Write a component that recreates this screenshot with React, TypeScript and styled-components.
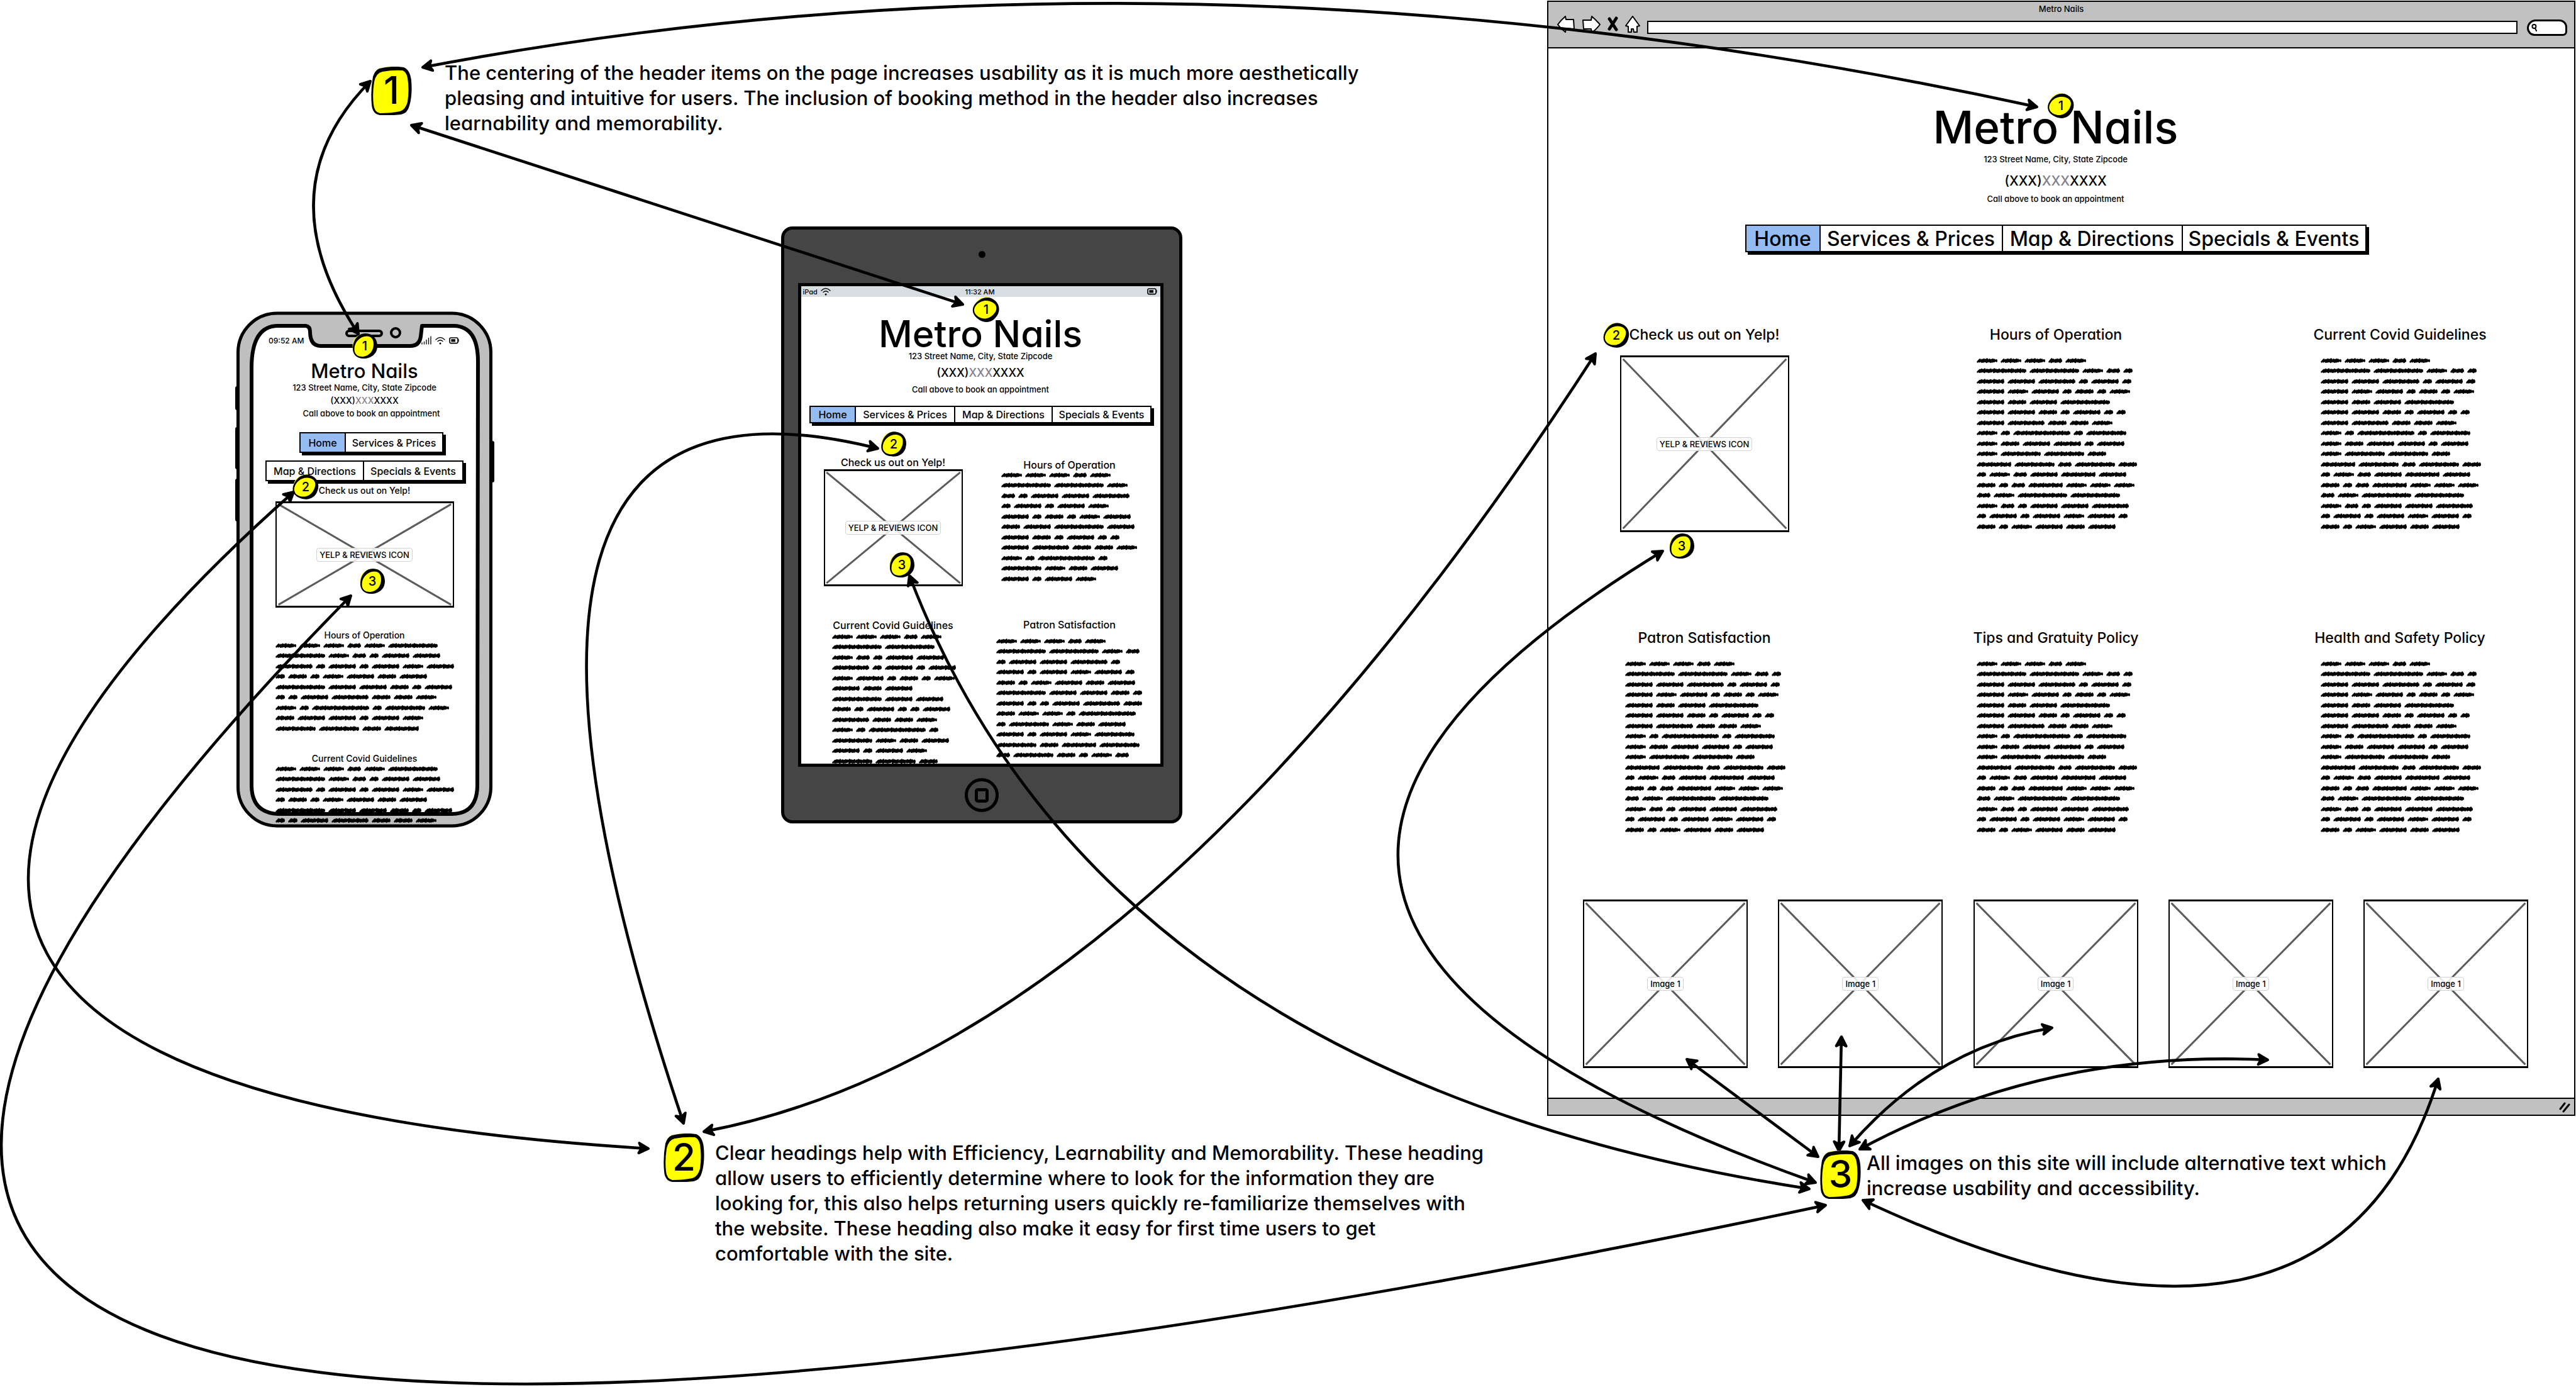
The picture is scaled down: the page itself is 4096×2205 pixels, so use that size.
import React from "react";
import styled, { createGlobalStyle } from "styled-components";

const INK = "#000000";
const CHROME = "#c1c1c1";
const FONT = `Inter, "Liberation Sans", Arial, sans-serif`;

const GlobalStyle = createGlobalStyle`
  *, *::before, *::after { box-sizing: border-box; }
  body {
    margin: 0;
    background: #ffffff;
    color: ${INK};
    font-family: ${FONT};
    font-feature-settings: "cv11";
    font-weight: 450;
  }
  h1, h2, p, figure { margin: 0; font-weight: inherit; }
`;

/* ---------- scribbled placeholder copy ---------- */

const WORDS = [
  33, 33, 33, 22, 33, 79, 79, 33, 22, 15, 44, 44, 59, 15, 44, 15, 44, 33, 44,
  15, 30, 15, 33, 44, 30, 44, 79, 44, 44, 30, 15, 44, 15, 15, 44, 59, 30, 30,
  33, 33, 15, 91, 15, 64, 33, 30, 44, 44, 15, 44, 33, 64, 64, 30, 55, 64, 22,
  64, 30, 15, 33, 22, 44, 55, 44, 30, 15, 22, 55,
];

const BREAKS = {
  desktop: [5, 5, 6, 7, 4, 7, 5, 5, 6, 4, 5, 6, 7, 4, 6, 7, 6],
  tabletHours: [5, 3, 5, 5, 6, 4, 6, 5, 4, 4, 4],
  tabletCovid: [5, 2, 5, 5, 6, 3, 3, 6, 4, 4, 4, 4, 3],
  tabletPatron: [5, 4, 5, 6, 6, 5, 6, 5, 5, 5, 4, 6],
  phoneHours: [6, 6, 7, 7, 6, 7, 6, 6, 4],
  phoneCovid: [6, 6, 7, 7, 6, 7],
};

function wave(width: number) {
  const highs = [2.2, 2.8, 1.8, 2.5, 3];
  const lows = [6.4, 5.8, 6.8, 6, 6.6];
  let d = "M1.6 6.2";
  let x = 1.6;
  let i = width % 5;
  while (x + 4 < width - 1) {
    d += ` L${(x + 3.6).toFixed(1)} ${highs[i % 5]} L${(x + 3).toFixed(1)} ${lows[i % 5]}`;
    x += i % 4 === 3 ? 3.6 : 2.6;
    i += 1;
  }
  return d + ` L${width - 1.6} 3.4 L${width - 1.4} 5.4`;
}

const ScribbleBlock = styled.div<{ $gap?: number; $indent?: number }>`
  display: flex;
  flex-direction: column;
  margin-top: ${(p) => p.$gap ?? 0}px;
  margin-left: ${(p) => p.$indent ?? 0}px;
  align-self: flex-start;
`;

const ScribbleRow = styled.div`
  display: flex;
  align-items: center;
  gap: 5px;
  height: 16px;
  &:nth-child(even) { height: 17px; }
`;

const ScribbleWord = styled.svg`
  display: block;
  flex: none;
  overflow: visible;
`;

function Scribble({ breaks, gap, indent }: { breaks: number[]; gap?: number; indent?: number }) {
  let cursor = 0;
  return (
    <ScribbleBlock $gap={gap} $indent={indent} aria-hidden="true">
      {breaks.map((count, row) => {
        const start = cursor;
        cursor += count;
        return (
          <ScribbleRow key={row}>
            {Array.from({ length: count }, (_, k) => {
              const w = WORDS[(start + k) % WORDS.length];
              return (
                <ScribbleWord key={k} width={w} height={9} viewBox={`0 0 ${w} 9`}>
                  <path d={wave(w)} fill="none" stroke={INK} strokeWidth={2.8} strokeLinejoin="round" strokeLinecap="round" />
                </ScribbleWord>
              );
            })}
          </ScribbleRow>
        );
      })}
    </ScribbleBlock>
  );
}

/* ---------- shared wireframe parts ---------- */

const Line = styled.p<{ $size: number; $height: number; $gap?: number }>`
  font-size: ${(p) => p.$size}px;
  line-height: ${(p) => p.$height}px;
  margin-top: ${(p) => p.$gap ?? 0}px;
  text-align: center;
  white-space: nowrap;
`;

const Heading = styled.h2<{ $size: number; $height: number; $gap?: number }>`
  font-size: ${(p) => p.$size}px;
  line-height: ${(p) => p.$height}px;
  margin-top: ${(p) => p.$gap ?? 0}px;
  font-weight: 450;
  text-align: center;
  white-space: nowrap;
`;

const ShopName = styled.h1<{ $size: number; $height: number; $gap?: number }>`
  font-size: ${(p) => p.$size}px;
  line-height: ${(p) => p.$height}px;
  margin-top: ${(p) => p.$gap ?? 0}px;
  font-weight: 500;
  text-align: center;
  white-space: nowrap;
`;

const Muted = styled.span`
  color: #82808c;
`;

function Phone({ size, height, gap }: { size: number; height: number; gap: number }) {
  return (
    <Line $size={size} $height={height} $gap={gap}>
      (XXX)<Muted>XXX</Muted>XXXX
    </Line>
  );
}

const Tabs = styled.nav<{ $height: number; $gap: number; $size: number }>`
  display: flex;
  height: ${(p) => p.$height}px;
  margin-top: ${(p) => p.$gap}px;
  border: 2px solid ${INK};
  background: #ffffff;
  box-shadow: 4px 4px 0 ${INK};
  font-size: ${(p) => p.$size}px;
`;

const Tab = styled.a<{ $width: number; $active?: boolean }>`
  display: flex;
  align-items: center;
  justify-content: center;
  width: ${(p) => p.$width}px;
  color: ${INK};
  text-decoration: none;
  white-space: nowrap;
  background: ${(p) => (p.$active ? "#94bbf2" : "#ffffff")};
  & + & { border-left: 2px solid ${INK}; }
`;

const TAB_NAMES = ["Home", "Services & Prices", "Map & Directions", "Specials & Events"];

function TabBar(props: { from?: number; widths: number[]; height: number; gap: number; size: number }) {
  const from = props.from ?? 0;
  return (
    <Tabs $height={props.height} $gap={props.gap} $size={props.size}>
      {props.widths.map((w, i) => (
        <Tab key={i} href="#" $width={w} $active={from + i === 0}>
          {TAB_NAMES[from + i]}
        </Tab>
      ))}
    </Tabs>
  );
}

const Frame = styled.figure<{ $w: number; $h: number; $gap?: number }>`
  display: grid;
  place-items: center;
  width: ${(p) => p.$w}px;
  height: ${(p) => p.$h}px;
  margin-top: ${(p) => p.$gap ?? 0}px;
  border: 2px solid ${INK};
  border-top-width: 3px;
  border-bottom-width: 3px;
  background: #ffffff;
  > * { grid-area: 1 / 1; }
`;

const Cross = styled.svg`
  width: 100%;
  height: 100%;
  display: block;
`;

const Caption = styled.figcaption`
  padding: 0 4px;
  border: 1px solid #d2d2d2;
  border-radius: 4px;
  background: rgba(255, 255, 255, 0.85);
  font-size: 13px;
  line-height: 20px;
  white-space: nowrap;
`;

function Placeholder({ w, h, gap, label }: { w: number; h: number; gap?: number; label: string }) {
  return (
    <Frame $w={w} $h={h} $gap={gap}>
      <Cross viewBox="0 0 100 100" preserveAspectRatio="none" aria-hidden="true">
        <g stroke="#5c5c5c" strokeWidth={3}>
          <line x1="1" y1="1" x2="99" y2="99" vectorEffect="non-scaling-stroke" />
          <line x1="99" y1="1" x2="1" y2="99" vectorEffect="non-scaling-stroke" />
        </g>
      </Cross>
      <Caption>{label}</Caption>
    </Frame>
  );
}

const StatusIcon = styled.svg`
  display: block;
  flex: none;
`;

function Wifi() {
  return (
    <StatusIcon width="16" height="13" viewBox="0 0 16 13" fill="none" stroke={INK} strokeLinecap="round">
      <path d="M1 5 Q8 -2 15 5" strokeWidth="1.3" />
      <path d="M4 7.6 Q8 4 12 7.6" strokeWidth="1.3" />
      <circle cx="8" cy="11" r="1.5" fill={INK} stroke="none" />
    </StatusIcon>
  );
}

function Battery() {
  return (
    <StatusIcon width="16" height="11" viewBox="0 0 16 11">
      <rect x="1" y="1" width="13" height="8.6" rx="2" fill="none" stroke={INK} strokeWidth="1.6" />
      <rect x="3.4" y="3.2" width="6.6" height="4.2" fill={INK} />
      <rect x="14" y="3.2" width="1.6" height="4" fill={INK} />
    </StatusIcon>
  );
}

function Signal() {
  return (
    <StatusIcon width="16" height="14" viewBox="0 0 16 14" stroke={INK} strokeWidth="1.3" strokeLinecap="round">
      <path d="M1 13V11 M4.5 13V9.5 M8 13V6.5 M11.5 13V3.5 M15 13V1" />
    </StatusIcon>
  );
}

/* ---------- canvas ---------- */

const Canvas = styled.main`
  position: relative;
  width: 100%;
  min-height: 100vh;
  overflow: hidden;
`;

const Spot = styled.div<{ $x: number; $y: number }>`
  position: absolute;
  left: ${(p) => p.$x}px;
  top: ${(p) => p.$y}px;
`;

/* ---------- desktop browser ---------- */

const BrowserWindow = styled.section`
  display: flex;
  flex-direction: column;
  width: 1635px;
  border: 2px solid ${INK};
  background: #ffffff;
`;

const Toolbar = styled.header`
  background: ${CHROME};
  border-bottom: 2px solid ${INK};
  padding-bottom: 13px;
`;

const ToolRow = styled.div`
  display: flex;
  align-items: center;
  gap: 11px;
  height: 37px;
  padding: 0 11px 0 14px;
`;

const ToolButton = styled.button`
  display: block;
  align-self: flex-start;
  padding: 0;
  border: 0;
  background: none;
  line-height: 0;
`;

const Address = styled.input`
  flex: 1;
  min-width: 0;
  height: 21px;
  padding: 0 8px;
  border: 2px solid ${INK};
  background: #ffffff;
  font-family: ${FONT};
  font-size: 13px;
`;

const SearchField = styled.label`
  display: flex;
  align-items: center;
  width: 64px;
  height: 26px;
  margin-left: 4px;
  padding-left: 4px;
  border: 3px solid ${INK};
  border-radius: 16px 14px 8px 14px;
  background: #ffffff;
`;

const SearchInput = styled.input`
  width: 40px;
  height: 16px;
  padding: 0;
  border: 0;
  background: transparent;
`;

const Site = styled.div`
  display: flex;
  flex-direction: column;
`;

const SiteHeader = styled.div`
  display: flex;
  flex-direction: column;
  align-items: center;
  padding: 85px 18px 0 0;
`;

const Features = styled.div`
  display: grid;
  grid-template-columns: 559fr 547fr 300px;
  row-gap: 153px;
  padding: 116px 127px 0 98px;
`;

const Feature = styled.section`
  display: flex;
  flex-direction: column;
  align-items: center;
  width: 300px;
`;

const Gallery = styled.div`
  display: flex;
  justify-content: space-between;
  padding: 103px 73px 47px 55px;
`;

const BrowserFooter = styled.footer`
  display: flex;
  align-items: center;
  justify-content: flex-end;
  height: 27px;
  padding-right: 6px;
  border-top: 2px solid ${INK};
  background: ${CHROME};
`;

const FEATURES = [
  "Hours of Operation",
  "Current Covid Guidelines",
  "Patron Satisfaction",
  "Tips and Gratuity Policy",
  "Health and Safety Policy",
];

function Desktop() {
  return (
    <BrowserWindow>
      <Toolbar>
        <Line $size={13} $height={22}>Metro Nails</Line>
        <ToolRow>
          <ToolButton aria-label="Back">
            <svg width="28" height="28" viewBox="0 0 28 28">
              <path d="M1 14 Q6 7 13 1 L14 6 L26 6 L27 21 L14 20 L13 26 Q6 21 1 14Z" fill="#fff" stroke={INK} strokeWidth="2" strokeLinejoin="round" />
            </svg>
          </ToolButton>
          <ToolButton aria-label="Forward">
            <svg width="30" height="28" viewBox="0 0 30 28">
              <path d="M29 14 Q23 7 16 1 L15 7 L2 7 L3 21 L15 21 L16 27 Q23 22 29 14Z" fill="#fff" stroke={INK} strokeWidth="2" strokeLinejoin="round" />
            </svg>
          </ToolButton>
          <ToolButton aria-label="Stop">
            <svg width="17" height="28" viewBox="0 0 17 28">
              <path d="M3 5 L14 22 M14 4 L3 21" stroke={INK} strokeWidth="5" strokeLinecap="round" />
            </svg>
          </ToolButton>
          <ToolButton aria-label="Home">
            <svg width="24" height="28" viewBox="0 0 24 28">
              <path d="M12 1 L1 16 L5 17 L5 26 L10 26 L10 21 L13 21 L14 26 L19 26 L19 17 L23 16 Z" fill="#fff" stroke={INK} strokeWidth="2" strokeLinejoin="round" />
            </svg>
          </ToolButton>
          <Address aria-label="Address" />
          <SearchField>
            <svg width="9" height="14" viewBox="0 0 9 14" fill="none" stroke={INK} strokeWidth="2">
              <circle cx="4.4" cy="5" r="3" />
              <path d="M6 8 L8 12" strokeLinecap="round" />
            </svg>
            <SearchInput aria-label="Search" />
          </SearchField>
        </ToolRow>
      </Toolbar>
      <Site>
        <SiteHeader>
          <ShopName $size={71} $height={80}>Metro Nails</ShopName>
          <Line $size={13} $height={20} $gap={1}>123 Street Name, City, State Zipcode</Line>
          <Phone size={21} height={24} gap={13} />
          <Line $size={13} $height={20} $gap={6}>Call above to book an appointment</Line>
          <TabBar widths={[116, 290, 286, 292]} height={44} gap={31} size={32} />
        </SiteHeader>
        <Features>
          <Feature>
            <Heading $size={23} $height={30}>Check us out on Yelp!</Heading>
            <Placeholder w={269} h={281} gap={18} label="YELP & REVIEWS ICON" />
          </Feature>
          {FEATURES.map((name) => (
            <Feature key={name}>
              <Heading $size={23} $height={30}>{name}</Heading>
              <Scribble breaks={BREAKS.desktop} gap={18} indent={24} />
            </Feature>
          ))}
        </Features>
        <Gallery>
          {[1, 2, 3, 4, 5].map((n) => (
            <Placeholder key={n} w={262} h={268} label="Image 1" />
          ))}
        </Gallery>
      </Site>
      <BrowserFooter>
        <svg width="18" height="20" viewBox="0 0 18 20" stroke={INK} strokeWidth="3" strokeLinecap="round">
          <path d="M2 13 L9 4 M7 17 L16 6" />
        </svg>
      </BrowserFooter>
    </BrowserWindow>
  );
}

/* ---------- tablet ---------- */

const TabletBody = styled.section`
  display: flex;
  flex-direction: column;
  align-items: center;
  width: 638px;
  padding: 34px 0 13px;
  border: 5px solid ${INK};
  border-radius: 18px;
  background: #454545;
`;

const Camera = styled.div`
  width: 11px;
  height: 11px;
  border-radius: 50%;
  background: ${INK};
`;

const TabletScreen = styled.div`
  width: 581px;
  height: 769px;
  margin: 40px 4px 18px 0;
  border: 5px solid ${INK};
  background: #ffffff;
  overflow: hidden;
`;

const TabletStatus = styled.div`
  display: grid;
  grid-template-columns: 1fr auto 1fr;
  align-items: center;
  height: 17px;
  padding: 0 5px 0 3px;
  background: #d7dee1;
  font-size: 11px;
`;

const StatusLeft = styled.div`
  display: flex;
  align-items: center;
  gap: 5px;
`;

const StatusRight = styled.div`
  display: flex;
  justify-content: flex-end;
`;

const TabletHeader = styled.div`
  display: flex;
  flex-direction: column;
  align-items: center;
  padding-top: 32px;
`;

const TabletColumns = styled.div`
  display: grid;
  grid-template-columns: 221px 234px;
  column-gap: 53px;
  padding: 54px 0 0 36px;
`;

const Column = styled.div<{ $top?: number }>`
  display: flex;
  flex-direction: column;
  align-items: center;
  padding-top: ${(p) => p.$top ?? 0}px;
`;

const HomeButton = styled.button`
  display: grid;
  place-items: center;
  width: 54px;
  height: 54px;
  padding: 0;
  border: 5px solid ${INK};
  border-radius: 50%;
  background: transparent;
`;

const HomeSquare = styled.span`
  width: 22px;
  height: 23px;
  border: 5px solid ${INK};
  border-radius: 5px;
`;

function Tablet() {
  return (
    <TabletBody>
      <Camera />
      <TabletScreen>
        <TabletStatus>
          <StatusLeft>iPad<Wifi /></StatusLeft>
          <span>11:32 AM</span>
          <StatusRight><Battery /></StatusRight>
        </TabletStatus>
        <TabletHeader>
          <ShopName $size={59} $height={54}>Metro Nails</ShopName>
          <Line $size={13} $height={16}>123 Street Name, City, State Zipcode</Line>
          <Phone size={18} height={20} gap={9} />
          <Line $size={13} $height={16} $gap={8}>Call above to book an appointment</Line>
          <TabBar widths={[70, 158, 155, 157]} height={28} gap={18} size={16} />
        </TabletHeader>
        <TabletColumns>
          <Column>
            <Heading $size={16} $height={16}>Check us out on Yelp!</Heading>
            <Placeholder w={221} h={186} gap={3} label="YELP & REVIEWS ICON" />
            <Heading $size={16} $height={16} $gap={54}>Current Covid Guidelines</Heading>
            <Scribble breaks={BREAKS.tabletCovid} gap={2} indent={13} />
          </Column>
          <Column $top={4}>
            <Heading $size={16} $height={16}>Hours of Operation</Heading>
            <Scribble breaks={BREAKS.tabletHours} indent={8} />
            <Heading $size={16} $height={16} $gap={57}>Patron Satisfaction</Heading>
            <Scribble breaks={BREAKS.tabletPatron} gap={10} />
          </Column>
        </TabletColumns>
      </TabletScreen>
      <HomeButton aria-label="Home"><HomeSquare /></HomeButton>
    </TabletBody>
  );
}

/* ---------- phone ---------- */

const PhoneBody = styled.section`
  position: relative;
  display: flex;
  flex-direction: column;
  align-items: center;
  width: 407px;
  height: 821px;
  padding: 38px 62px 0;
`;

const PhoneShell = styled.svg`
  position: absolute;
  inset: 0;
  z-index: -1;
  overflow: visible;
`;

const PhoneStatus = styled.div`
  display: flex;
  align-items: center;
  align-self: stretch;
  gap: 6px;
  height: 16px;
  margin: 0 -9px 23px -11px;
  font-size: 12px;
`;

const Clock = styled.span`
  flex: 1;
`;

const Booking = styled.div`
  display: flex;
  flex-direction: column;
  align-items: center;
  padding-left: 22px;
`;

const Isolated = styled(Spot)`
  isolation: isolate;
`;

function PhoneDevice() {
  return (
    <PhoneBody>
      <PhoneShell width="407" height="821" viewBox="0 0 407 821" aria-hidden="true">
        <g fill={INK}>
          <rect x="-2" y="119" width="8" height="38" rx="3" />
          <rect x="-2" y="184" width="8" height="67" rx="3" />
          <rect x="-2" y="266" width="8" height="68" rx="3" />
          <rect x="402" y="206" width="8" height="66" rx="3" />
        </g>
        <rect x="2.5" y="3" width="402" height="815" rx="62" fill="#bfbfbf" stroke={INK} strokeWidth="5" />
        <path
          d="M24 90 Q24 23 66 23 L110 23 Q117 24 117 32 Q117 55 134 55 L276 55 Q291 55 293 40 L295 23 L346 23 Q384 24 384 80 L383 755 Q382 799 342 799 L66 799 Q25 797 24 755 Z"
          fill="#fff"
          stroke={INK}
          strokeWidth="6"
          strokeLinejoin="round"
        />
        <rect x="175" y="31" width="56" height="8" rx="4" fill="none" stroke={INK} strokeWidth="4" />
        <circle cx="253" cy="34" r="7" fill="none" stroke={INK} strokeWidth="4" />
      </PhoneShell>
      <PhoneStatus>
        <Clock>09:52 AM</Clock>
        <Signal />
        <Wifi />
        <Battery />
      </PhoneStatus>
      <ShopName $size={31} $height={36}>Metro Nails</ShopName>
      <Line $size={13} $height={16}>123 Street Name, City, State Zipcode</Line>
      <Phone size={14} height={18} gap={4} />
      <Booking>
        <Line $size={13} $height={16} $gap={3}>Call above to book an appointment</Line>
        <TabBar widths={[70, 155]} height={33} gap={22} size={16} />
      </Booking>
      <TabBar from={2} widths={[153, 158]} height={33} gap={12} size={16} />
      <Heading $size={14} $height={16} $gap={7}>Check us out on Yelp!</Heading>
      <Placeholder w={284} h={169} gap={9} label="YELP & REVIEWS ICON" />
      <Heading $size={14} $height={16} $gap={36}>Hours of Operation</Heading>
      <Scribble breaks={BREAKS.phoneHours} />
      <Heading $size={14} $height={16} $gap={32}>Current Covid Guidelines</Heading>
      <Scribble breaks={BREAKS.phoneCovid} />
    </PhoneBody>
  );
}

/* ---------- annotations ---------- */

const ArrowLayer = styled.svg`
  position: absolute;
  left: 0;
  top: 0;
  pointer-events: none;
`;

const ARROWS = [
  "M672 107 Q1889 -124 3239 170",
  "M589 129 Q418 301 570 531",
  "M654 199 L1531 484",
  "M1031 1826 Q-600 1727 467 782",
  "M1087 1786 Q665 530 1396 713",
  "M1119 1799 Q1822 1668 2537 562",
  "M2877 1890 Q1752 1716 1446 915",
  "M2903 1916 Q-1268 2797 558 947",
  "M2887 1880 Q1694 1455 2644 876",
  "M2891 1839 L2682 1684",
  "M2924 1830 L2928 1648",
  "M2941 1822 Q3077 1665 3263 1634",
  "M2957 1827 Q3253 1668 3606 1685",
  "M2962 1908 Q3708 2257 3877 1715",
];

function Arrows() {
  return (
    <ArrowLayer width="4096" height="2205" viewBox="0 0 4096 2205" aria-hidden="true">
      <defs>
        <marker id="head" markerUnits="userSpaceOnUse" markerWidth="30" markerHeight="30" viewBox="-24 -15 30 30" refX="-2" refY="0" orient="auto-start-reverse">
          <path d="M-2 0 L-17 -8 L-13 0 L-17 8 Z" fill={INK} stroke={INK} strokeWidth="4" strokeLinejoin="round" />
        </marker>
      </defs>
      {ARROWS.map((d) => (
        <path key={d} d={d} fill="none" stroke={INK} strokeWidth="4.6" markerStart="url(#head)" markerEnd="url(#head)" />
      ))}
    </ArrowLayer>
  );
}

const Pin = styled.div<{ $x: number; $y: number; $tilt: number }>`
  position: absolute;
  left: ${(p) => p.$x - 20}px;
  top: ${(p) => p.$y - 20}px;
  display: grid;
  place-items: center;
  width: 40px;
  height: 40px;
  font-size: 20px;
  line-height: 20px;
  > * { grid-area: 1 / 1; }
  > svg { transform: rotate(${(p) => p.$tilt}deg); }
  > span { z-index: 1; }
`;

const PINS = [
  { n: 1, x: 580, y: 550, tilt: 0 },
  { n: 2, x: 486, y: 774, tilt: 20 },
  { n: 3, x: 592, y: 924, tilt: 0 },
  { n: 1, x: 1568, y: 492, tilt: 40 },
  { n: 2, x: 1421, y: 706, tilt: 10 },
  { n: 3, x: 1434, y: 898, tilt: 0 },
  { n: 1, x: 3277, y: 168, tilt: 30 },
  { n: 2, x: 2570, y: 533, tilt: 20 },
  { n: 3, x: 2674, y: 868, tilt: 0 },
];

function Pins() {
  return (
    <>
      {PINS.map((p, i) => (
        <Pin key={i} $x={p.x} $y={p.y} $tilt={p.tilt}>
          <svg width="40" height="40" viewBox="0 0 40 40" aria-hidden="true">
            <circle cx="19.5" cy="19.5" r="19" fill="#ffff00" />
            <path
              fillRule="evenodd"
              d="M21 0 C33 0 40 9 40 20 C40 32 31 40 18 40 C7 40 0 33 1 22 C2 9 10 0 21 0 Z M23 4.500 C12 5 4 14 3.500 24 C3 33 9 37.500 17 37 C28 36 34 27 34 17 C34 9 30 4.500 23 4.500 Z"
              fill={INK}
            />
          </svg>
          <span>{p.n}</span>
        </Pin>
      ))}
    </>
  );
}

const NoteNumber = styled.div`
  display: grid;
  place-items: center;
  width: 65px;
  height: 77px;
  font-size: 60px;
  line-height: 70px;
  font-weight: 500;
  > * { grid-area: 1 / 1; }
  > span { padding-bottom: 4px; }
`;

const NoteText = styled.p`
  font-size: 31px;
  line-height: 40px;
  white-space: nowrap;
`;

const NOTES = [
  {
    n: 1, bx: 590, by: 106, tx: 707, ty: 96,
    lines: [
      "The centering of the header items on the page increases usability as it is much more aesthetically",
      "pleasing and intuitive for users. The inclusion of booking method in the header also increases",
      "learnability and memorability.",
    ],
  },
  {
    n: 2, bx: 1055, by: 1802, tx: 1137, ty: 1813,
    lines: [
      "Clear headings help with Efficiency, Learnability and Memorability. These heading",
      "allow users to efficiently determine where to look for the information they are",
      "looking for, this also helps returning users quickly re-familiarize themselves with",
      "the website. These heading also make it easy for first time users to get",
      "comfortable with the site.",
    ],
  },
  {
    n: 3, bx: 2894, by: 1829, tx: 2968, ty: 1829,
    lines: [
      "All images on this site will include alternative text which",
      "increase usability and accessibility.",
    ],
  },
];

function Notes() {
  return (
    <>
      {NOTES.map((note) => (
        <React.Fragment key={note.n}>
          <Spot $x={note.bx} $y={note.by}>
            <NoteNumber>
              <svg width="65" height="77" viewBox="0 0 65 77" aria-hidden="true">
                <path d="M14 2 Q34 -2 52 2 Q61 6 62 22 Q64 45 60 62 Q57 73 48 75 Q30 77 14 75 Q4 74 2 60 Q0 38 3 18 Q5 6 14 2Z" fill="#ffff00" />
                <path
                  fillRule="evenodd"
                  d="M13 3 Q34 -2 52 1 Q62 5 64 22 Q66 45 61 62 Q58 74 48 76 Q30 78 14 77 Q2 75 1 60 Q-1 38 3 16 Q6 6 13 3Z M18 8 Q8 10 5 24 Q2 44 4 60 Q5 72 14 74 Q32 74 46 71 Q55 68 58 56 Q61 36 58 18 Q56 8 50 6 Q34 5 18 8Z"
                  fill={INK}
                />
              </svg>
              <span>{note.n}</span>
            </NoteNumber>
          </Spot>
          <Spot $x={note.tx} $y={note.ty}>
            <NoteText>
              {note.lines.map((line, i) => (
                <React.Fragment key={i}>
                  {i > 0 && <br />}
                  {line}
                </React.Fragment>
              ))}
            </NoteText>
          </Spot>
        </React.Fragment>
      ))}
    </>
  );
}

export default function App() {
  return (
    <>
      <GlobalStyle />
      <Canvas>
        <Isolated $x={376} $y={495}><PhoneDevice /></Isolated>
        <Spot $x={1242} $y={360}><Tablet /></Spot>
        <Spot $x={2460} $y={1}><Desktop /></Spot>
        <Arrows />
        <Notes />
        <Pins />
      </Canvas>
    </>
  );
}
